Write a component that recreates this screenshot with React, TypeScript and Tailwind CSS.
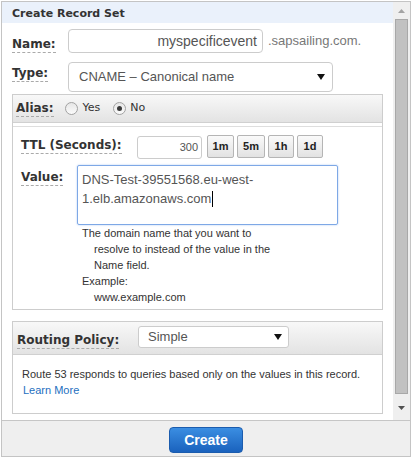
import React from "react";

const labelCls =
  "block w-fit font-['DejaVu_Sans',Verdana,sans-serif] font-bold text-[12px] leading-[14px] pb-px text-[#333] border-b border-dashed border-[#aaa] whitespace-nowrap";
const arial = "font-['Liberation_Sans',Arial,sans-serif]";

function Arrow({ className }: { className?: string }) {
  return (
    <svg width="8" height="6" viewBox="0 0 8 6" className={className}>
      <polygon points="0,0 8,0 4,6" fill="#111" />
    </svg>
  );
}

function Radio({ checked }: { checked?: boolean }) {
  return (
    <span className="w-[13px] h-[13px] rounded-full border border-[#a2a2a2] bg-linear-to-b from-[#e6e6e6] to-[#fbfbfb] flex items-center justify-center">
      {checked && <span className="w-[5px] h-[5px] rounded-full bg-[#3a3a3a]" />}
    </span>
  );
}

function TtlButton({ label, w }: { label: string; w: string }) {
  return (
    <div
      className={`${w} h-[23px] border border-[#b5b5b5] rounded-[2px] bg-linear-to-b from-[#fafafa] to-[#e2e2e2] flex items-center justify-center ${arial} font-bold text-[11px] text-[#222]`}
    >
      {label}
    </div>
  );
}

export default function App() {
  return (
    <div className="w-[416px] h-[459px] bg-white pt-px pl-px">
      <div className="w-[410px] h-[456px] border border-[#c4c4c4] flex flex-col">
        <div className="flex h-[418px]">
          {/* main column */}
          <div className="w-[391px] flex flex-col">
            <div className="h-[21px] bg-[#eaf1fb] pl-[10px] pt-[2px] font-['DejaVu_Sans',Verdana,sans-serif] font-bold text-[11px] leading-[19px] text-[#333]">
              Create Record Set
            </div>
            <div className="flex-1 overflow-hidden bg-white">
              {/* Name row */}
              <div className="mt-[6px] pl-[10px] flex items-start">
                <div className="w-[56px] pt-[8px]">
                  <span className={labelCls}>Name:</span>
                </div>
                <div className="flex items-center">
                  <div
                    className={`w-[195px] h-[24px] border border-[#cccccc] rounded-[4px] flex items-center justify-end pr-[5px] ${arial} text-[14px] text-[#555]`}
                  >
                    myspecificevent
                  </div>
                  <span className={`ml-[5px] ${arial} text-[13px] text-[#777]`}>.sapsailing.com.</span>
                </div>
              </div>
              {/* Type row */}
              <div className="mt-[9px] pl-[10px] flex items-start">
                <div className="w-[56px] pt-[4px]">
                  <span className={labelCls}>Type:</span>
                </div>
                <div
                  className={`w-[265px] h-[30px] border border-[#cccccc] rounded-[4px] flex items-center justify-between pl-[10px] pr-[7px] ${arial} text-[13px] text-[#555]`}
                >
                  <span>CNAME – Canonical name</span>
                  <Arrow />
                </div>
              </div>
              {/* Alias box */}
              <div className="mt-[2px] ml-[10px] w-[371px] border border-[#cdcdcd]">
                <div className="h-[28px] bg-linear-to-b from-[#f8f8f8] to-[#e3e3e3] border-b border-[#d0d0d0] flex items-center pl-[3px]">
                  <span className={labelCls}>Alias:</span>
                  <div className="ml-[11px] flex items-center gap-[5px] font-['DejaVu_Sans',Verdana,sans-serif] text-[11px] text-[#333]">
                    <Radio />
                    <span>Yes</span>
                    <span className="ml-[8px]">
                      <Radio checked />
                    </span>
                    <span className="-ml-px">No</span>
                  </div>
                </div>
                <div className="h-[3px]" />
                <div className="border-t border-[#dedede] pt-[9px] pl-[8px] pb-[4px]">
                  {/* TTL */}
                  <div className="flex items-start">
                    <div className="w-[116px] pt-[2px]">
                      <span className={labelCls}>TTL (Seconds):</span>
                    </div>
                    <div
                      className={`w-[65px] h-[23px] border border-[#cccccc] rounded-[3px] flex items-center justify-end pr-[3px] ${arial} text-[11px] text-[#555]`}
                    >
                      300
                    </div>
                    <div className="ml-[5px] -mt-px flex gap-[3px]">
                      <TtlButton label="1m" w="w-[27px]" />
                      <TtlButton label="5m" w="w-[28px]" />
                      <TtlButton label="1h" w="w-[26px]" />
                      <TtlButton label="1d" w="w-[26px]" />
                    </div>
                  </div>
                  {/* Value */}
                  <div className="mt-[6px] flex items-start">
                    <div className="w-[56px] pt-[5px]">
                      <span className={labelCls}>Value:</span>
                    </div>
                    <div
                      className={`w-[261px] h-[60px] border border-[#7ea8e6] shadow-[0_0_2px_#a9c6f0] rounded-[2px] px-[4px] pt-[4px] ${arial} text-[13px] leading-[19px] text-[#555]`}
                    >
                      <div>DNS-Test-39551568.eu-west-</div>
                      <div className="flex items-center">
                        1.elb.amazonaws.com
                        <span className="inline-block w-px h-[16px] bg-black ml-px" />
                      </div>
                    </div>
                  </div>
                  {/* Help */}
                  <div className={`pl-[61px] ${arial} text-[11px] leading-[16px] text-[#333]`}>
                    <div>The domain name that you want to</div>
                    <div className="pl-[12px]">resolve to instead of the value in the</div>
                    <div className="pl-[12px]">Name field.</div>
                    <div>Example:</div>
                    <div className="pl-[12px]">www.example.com</div>
                  </div>
                </div>
              </div>
              {/* Routing box */}
              <div className="mt-[11px] ml-[10px] w-[371px] border border-[#cdcdcd]">
                <div className="h-[33px] bg-linear-to-b from-[#f8f8f8] to-[#e3e3e3] border-b border-[#d0d0d0] flex items-start pl-[4px]">
                  <div className="w-[121px] mt-[11px]">
                    <span className={labelCls}>Routing Policy:</span>
                  </div>
                  <div
                    className={`mt-[4px] w-[151px] h-[22px] bg-white border border-[#cccccc] rounded-[3px] flex items-center justify-between pl-[9px] pr-[6px] ${arial} text-[13px] text-[#555]`}
                  >
                    <span>Simple</span>
                    <Arrow />
                  </div>
                </div>
                <div className={`pt-[11px] pb-[15px] pl-[9px] ${arial} text-[11px] leading-[16px] text-[#333]`}>
                  <div>Route 53 responds to queries based only on the values in this record.</div>
                  <div className="pl-px text-[#1e6fc0]">Learn More</div>
                </div>
              </div>
            </div>
          </div>
          {/* scrollbar */}
          <div className="w-[17px] bg-[#efefef] flex flex-col">
            <div className="h-[17px] flex items-center justify-center">
              <svg width="7" height="4" viewBox="0 0 7 4">
                <polygon points="0,4 7,4 3.5,0" fill="#a3a3a3" />
              </svg>
            </div>
            <div className="ml-[2px] w-[13px] h-[375px] bg-[#c1c1c1] border border-[#a8a8a8]" />
            <div className="flex-1 flex items-center justify-center pt-[2px]">
              <svg width="7" height="4" viewBox="0 0 7 4">
                <polygon points="0,0 7,0 3.5,4" fill="#505050" />
              </svg>
            </div>
          </div>
        </div>
        {/* footer */}
        <div className="h-[36px] border-t border-[#c6c6c6] bg-[#efefef] flex justify-center pt-[6px]">
          <div
            className={`w-[74px] h-[26px] rounded-[4px] border border-[#1b5cae] bg-linear-to-b from-[#3b8ee2] to-[#1a62bd] flex items-center justify-center ${arial} font-bold text-[14px] text-white`}
          >
            Create
          </div>
        </div>
      </div>
    </div>
  );
}
